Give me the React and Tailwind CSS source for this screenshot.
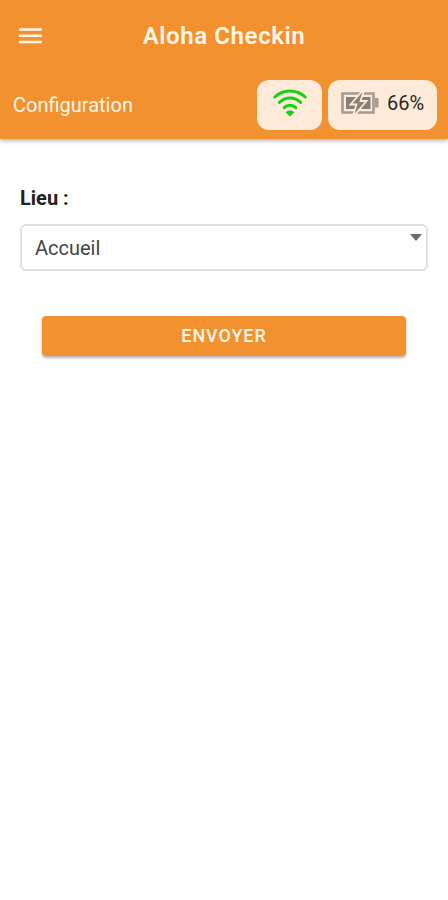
import React, { useState } from "react";

const places = ["Accueil", "Bar", "Restaurant"];

const WifiIcon = () => (
  <svg width="34" height="28" viewBox="0 0 34 28" fill="none" stroke="#12d012" strokeWidth="3" strokeLinecap="round" aria-hidden="true">
    <path d="M1.8 8C10.5 0 23.5 0 32.2 8" />
    <path d="M6.4 13.4C12.5 7.6 21.5 7.6 27.6 13.4" />
    <path d="M11.2 18.6C14.5 15.4 19.5 15.4 22.8 18.6" />
    <path d="M17 27.6L12.8 23.4C14.5 20.8 19.5 20.8 21.2 23.4Z" fill="#12d012" stroke="none" />
  </svg>
);

const BatteryIcon = () => (
  <svg width="38" height="22" viewBox="0 0 38 22" aria-hidden="true">
    <path d="M1.5 1.5H32.5V20.5H1.5Z" fill="none" stroke="#a39b94" strokeWidth="2.6" />
    <path d="M34 6H37.5V15.5H34Z" fill="#a39b94" />
    <path d="M5 5H29.5V17H5Z" fill="#857f7a" />
    <path d="M20.5 0L9.5 12.5H15.5L12.5 22H14.5L25.5 9H19.5L22.5 0Z" fill="#857f7a" stroke="#feead8" strokeWidth="1.8" />
  </svg>
);

const App = () => {
  const [place, setPlace] = useState("Accueil");

  return (
    <div className="min-h-screen bg-white font-['Roboto',sans-serif] text-[#222222]">
      {/* Header */}
      <header className="bg-[#f29130] text-[#fff5e8] shadow-[0_1px_5px_rgba(0,0,0,0.4)]">
        <div className="grid grid-cols-[24px_1fr_24px] items-center px-[18px] h-[71px]">
          <button type="button" aria-label="Menu" className="h-6 w-6">
            <svg width="24" height="24" viewBox="0 0 24 24" fill="none" stroke="currentColor" strokeWidth="2.4" aria-hidden="true">
              <path d="M1 5.5H24M1 11.8H24M1 18H24" />
            </svg>
          </button>
          <h1 className="text-center text-2xl font-semibold tracking-wide">Aloha Checkin</h1>
        </div>

        <div className="flex items-center justify-between pl-[13px] pr-[11px] py-[9px]">
          <h2 className="text-xl">Configuration</h2>
          <div className="flex gap-[6px]">
            <div className="flex h-[50px] w-[65px] items-center justify-center rounded-xl bg-[#feead8] pb-1">
              <WifiIcon />
            </div>
            <div className="flex h-[50px] w-[109px] items-center justify-center gap-2 rounded-xl bg-[#feead8] pb-1 text-xl text-[#2a2420]">
              <BatteryIcon />
              <span>66%</span>
            </div>
          </div>
        </div>
      </header>

      {/* Place form */}
      <form className="px-5 pt-[45px]" onSubmit={(e) => e.preventDefault()}>
        <label htmlFor="place" className="block text-xl leading-7 font-bold">
          Lieu :
        </label>
        <div className="relative mt-3">
          <select
            id="place"
            value={place}
            onChange={(e) => setPlace(e.target.value)}
            className="block h-[47px] w-full appearance-none rounded-md border-2 border-[#e0e0e0] bg-white px-[13px] text-xl text-[#444444]"
          >
            {places.map((p) => (
              <option key={p} value={p}>
                {p}
              </option>
            ))}
          </select>
          <svg className="pointer-events-none absolute top-[10px] right-[6px]" width="12" height="7" viewBox="0 0 12 7" aria-hidden="true">
            <path d="M0 0H12L6 7Z" fill="#6b6b6b" />
          </svg>
        </div>
        <div className="px-[22px] pt-[45px]">
          <button
            type="submit"
            className="h-10 w-full rounded bg-[#f29130] text-lg font-medium tracking-wider text-[#fff5e8] uppercase shadow-[0_2px_3px_rgba(0,0,0,0.3)]"
          >
            Envoyer
          </button>
        </div>
      </form>
    </div>
  );
};

export default App;
